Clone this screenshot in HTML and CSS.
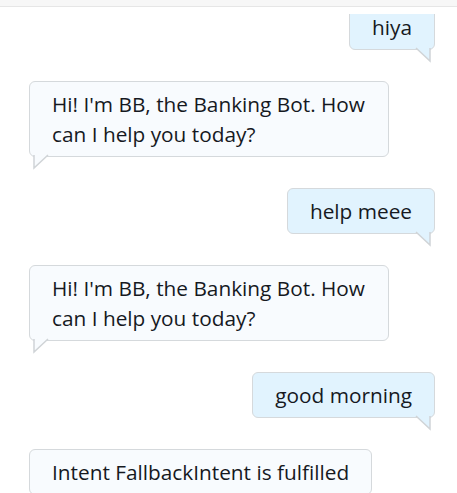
FILE: index.html
```html
<!DOCTYPE html>
<html>
<head>
<meta charset="utf-8">
<link rel="stylesheet" href="styles.css">
</head>
<body>
<div class="topbar"></div>
<div class="viewport">
  <div class="messages">
    <div class="bubble user">hiya<svg class="tail" width="15" height="14" viewBox="0 0 15 14"><polygon points="0,0 14,13 14,0" class="fill"/><polyline points="0,0 14,13 14,0" class="edge"/></svg></div>
    <div class="bubble bot">Hi! I'm BB, the Banking Bot. How can I help you today?<svg class="tail" width="15" height="14" viewBox="0 0 15 14"><polygon points="15,0 1,13 1,0" class="fill"/><polyline points="15,0 1,13 1,0" class="edge"/></svg></div>
    <div class="bubble user">help meee<svg class="tail" width="15" height="14" viewBox="0 0 15 14"><polygon points="0,0 14,13 14,0" class="fill"/><polyline points="0,0 14,13 14,0" class="edge"/></svg></div>
    <div class="bubble bot">Hi! I'm BB, the Banking Bot. How can I help you today?<svg class="tail" width="15" height="14" viewBox="0 0 15 14"><polygon points="15,0 1,13 1,0" class="fill"/><polyline points="15,0 1,13 1,0" class="edge"/></svg></div>
    <div class="bubble user">good morning<svg class="tail" width="15" height="14" viewBox="0 0 15 14"><polygon points="0,0 14,13 14,0" class="fill"/><polyline points="0,0 14,13 14,0" class="edge"/></svg></div>
    <div class="bubble bot">Intent FallbackIntent is fulfilled</div>
  </div>
</div>
</body>
</html>
```
FILE: styles.css
```css
html, body {
  margin: 0;
  padding: 0;
  background: #ffffff;
}
body {
  font-family: "Open Sans", "Liberation Sans", sans-serif;
  color: #16191f;
  width: 457px;
  height: 493px;
  overflow: hidden;
}
.topbar {
  height: 6px;
  background: #f7f7f7;
  border-bottom: 1px solid #e6e6e6;
}
.viewport {
  margin-top: 7px;
  height: 479px;
  overflow: hidden;
}
.messages {
  margin-top: -10px;
  display: flex;
  flex-direction: column;
  gap: 31px;
  padding: 0 22px 0 29px;
}
.bubble {
  position: relative;
  box-sizing: border-box;
  border: 1px solid #d5d9dc;
  border-radius: 6px;
  padding: 7px 22px;
  font-size: 20.8px;
  line-height: 30px;
}
.user {
  align-self: flex-end;
  background: #e1f3fe;
  padding: 7px 22px;
}
.bot {
  align-self: flex-start;
  background: #f8fbfe;
  max-width: 360px;
  width: fit-content;
}
.tail {
  position: absolute;
  bottom: -13px;
  overflow: visible;
}
.user .tail {
  right: 3px;
}
.bot .tail {
  left: 3px;
}
.user .fill { fill: #e1f3fe; }
.bot .fill { fill: #f8fbfe; }
.edge {
  fill: none;
  stroke: #d0d4d7;
  stroke-width: 1.5;
}
```
